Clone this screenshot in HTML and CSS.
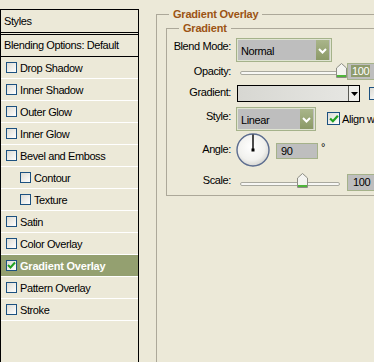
FILE: index.html
```html
<!DOCTYPE html>
<html lang="en">
<head>
  <meta charset="UTF-8">
  <title>Layer Style - Gradient Overlay</title>
  <link rel="stylesheet" href="styles.css">
</head>
<body>
  <div class="dialog">

    <div class="styles-list">
      <div class="list-head">Styles</div>
      <div class="list-blend">Blending Options: Default</div>
      <div class="item"><span class="cb"></span>Drop Shadow</div>
      <div class="item"><span class="cb"></span>Inner Shadow</div>
      <div class="item"><span class="cb"></span>Outer Glow</div>
      <div class="item"><span class="cb"></span>Inner Glow</div>
      <div class="item"><span class="cb"></span>Bevel and Emboss</div>
      <div class="item sub"><span class="cb"></span>Contour</div>
      <div class="item sub"><span class="cb"></span>Texture</div>
      <div class="item"><span class="cb"></span>Satin</div>
      <div class="item"><span class="cb"></span>Color Overlay</div>
      <div class="item active">
        <span class="cb"><svg width="9" height="9" viewBox="0 0 9 9"><polyline points="1,4 3.5,6.5 8,1.5" fill="none" stroke="#21a121" stroke-width="2"/></svg></span>Gradient Overlay
      </div>
      <div class="item"><span class="cb"></span>Pattern Overlay</div>
      <div class="item"><span class="cb"></span>Stroke</div>
    </div>

    <fieldset class="group outer">
      <legend>Gradient Overlay</legend>
      <fieldset class="group inner">
        <legend>Gradient</legend>

        <div class="row r-blend">
          <label>Blend Mode:</label>
          <div class="select blend-select">
            <span class="sel-text">Normal</span>
            <span class="sel-btn"><svg width="13" height="13" viewBox="0 0 13 13"><polyline points="3,5 6.5,8.5 10,5" fill="none" stroke="#fff" stroke-width="2"/></svg></span>
          </div>
        </div>

        <div class="row r-opacity">
          <label>Opacity:</label>
          <div class="slider">
            <div class="track"></div>
            <svg class="thumb thumb-max" width="11" height="15" viewBox="0 0 11 15">
              <path d="M0.5,14.5 V5 L5.5,0.5 L10.5,5 V14.5 Z" fill="#f4f4f0" stroke="#8d8d84"/>
              <rect x="1" y="12" width="9" height="2" fill="#4fb53a"/>
            </svg>
          </div>
          <div class="num num-sel"><span>100</span></div>
        </div>

        <div class="row r-gradient">
          <label>Gradient:</label>
          <div class="grad-box">
            <div class="grad-fill"></div>
            <div class="grad-arrow"><svg width="7" height="4" viewBox="0 0 7 4"><polygon points="0,0 7,0 3.5,4" fill="#000"/></svg></div>
          </div>
          <span class="cb cb-reverse"></span>
        </div>

        <div class="row r-style">
          <label>Style:</label>
          <div class="select style-select">
            <span class="sel-text">Linear</span>
            <span class="sel-btn"><svg width="13" height="13" viewBox="0 0 13 13"><polyline points="3,5 6.5,8.5 10,5" fill="none" stroke="#fff" stroke-width="2"/></svg></span>
          </div>
          <span class="cb cb-align"><svg width="9" height="9" viewBox="0 0 9 9"><polyline points="1,4 3.5,6.5 8,1.5" fill="none" stroke="#21a121" stroke-width="2"/></svg></span>
          <span class="align-text">Align with Layer</span>
        </div>

        <div class="row r-angle">
          <label>Angle:</label>
          <svg class="dial" width="34" height="34" viewBox="0 0 34 34">
            <defs>
              <radialGradient id="dialFill" cx="0.45" cy="0.4" r="0.6">
                <stop offset="0" stop-color="#ffffff"/>
                <stop offset="0.7" stop-color="#f1f1ee"/>
                <stop offset="1" stop-color="#d6d6d2"/>
              </radialGradient>
            </defs>
            <circle cx="17" cy="17" r="16" fill="url(#dialFill)" stroke="#5b6c8f" stroke-width="1.4"/>
            <line x1="17" y1="17" x2="17" y2="1.5" stroke="#000" stroke-width="1.4"/>
            <rect x="15.5" y="15.5" width="3" height="3" fill="#000"/>
          </svg>
          <div class="num num-angle"><span>90</span></div>
          <span class="deg">°</span>
        </div>

        <div class="row r-scale">
          <label>Scale:</label>
          <div class="slider">
            <div class="track"></div>
            <svg class="thumb thumb-mid" width="11" height="15" viewBox="0 0 11 15">
              <path d="M0.5,14.5 V5 L5.5,0.5 L10.5,5 V14.5 Z" fill="#f4f4f0" stroke="#8d8d84"/>
              <rect x="1" y="12" width="9" height="2" fill="#4fb53a"/>
            </svg>
          </div>
          <div class="num num-scale"><span>100</span></div>
        </div>

      </fieldset>
    </fieldset>

  </div>
</body>
</html>
```

FILE: styles.css
```css
body {
  margin: 0;
  background: #ece9d8;
  font-family: "Liberation Sans", Arial, sans-serif;
  font-size: 11px;
  letter-spacing: -0.4px;
  color: #000;
  overflow: hidden;
  height: 362px;
}
.dialog {
  display: flex;
  align-items: flex-start;
  width: 640px;
}

/* left list */
.styles-list {
  flex: none;
  width: 139px;
  height: 360px;
  margin-top: 9px;
  border: 1px solid #000;
  border-bottom: none;
  box-sizing: border-box;
}
.list-head {
  height: 22px;
  line-height: 22px;
  padding-left: 3px;
  border-bottom: 3px double #000;
}
.list-blend {
  height: 21px;
  line-height: 21px;
  padding-left: 3px;
  border-bottom: 1px solid #000;
}
.item {
  height: 21px;
  display: flex;
  align-items: center;
  padding-left: 5px;
  border-bottom: 1px solid #fff;
}
.item.sub {
  padding-left: 19px;
}
.item.active {
  background: #94a070;
  color: #fff;
  font-weight: bold;
  letter-spacing: -0.2px;
}
.cb {
  flex: none;
  width: 11px;
  height: 11px;
  margin-right: 3px;
  border: 1px solid #1c5180;
  box-sizing: border-box;
  background: linear-gradient(135deg, #dcdbd4, #ffffff);
  display: flex;
  align-items: center;
  justify-content: center;
}
.cb svg {
  display: block;
}

/* group boxes */
.group {
  border: 1px solid #aca899;
  margin: 0;
  min-width: 0;
}
.group legend {
  font-weight: bold;
  color: #9c5414;
  line-height: 13px;
  padding: 0 4px;
  letter-spacing: -0.2px;
}
.outer {
  flex: none;
  width: 420px;
  height: 400px;
  margin: 8px 0 0 17px;
  padding: 1px 0 0 9px;
}
.outer > legend {
  margin-left: 3px;
}
.inner {
  width: 300px;
  padding: 3px 0 4px 0;
}
.inner > legend {
  margin-left: 12px;
}

/* rows */
.row {
  display: flex;
  align-items: flex-start;
}
.row label {
  flex: none;
  width: 64px;
  margin-right: 5px;
  text-align: right;
  line-height: 13px;
}
.r-blend { height: 24px; }
.r-blend label { margin-top: 2px; }
.r-opacity { height: 17px; margin-top: 1px; }
.r-opacity label { margin-top: 2px; }
.r-gradient { height: 17px; margin-top: 5px; }
.r-gradient label { margin-top: 1px; }
.r-style { height: 24px; margin-top: 5px; }
.r-style label { margin-top: 3px; }
.r-angle { height: 33px; margin-top: 2px; }
.r-angle label { margin-top: 10px; }
.r-scale { height: 17px; margin-top: 8px; }

/* select boxes */
.select {
  flex: none;
  display: flex;
  align-items: center;
  height: 24px;
  box-sizing: border-box;
  border: 1px solid #a5b28a;
  box-shadow: inset 0 0 0 1px #dfe4d2;
  background: #bebebe;
}
.blend-select { width: 96px; }
.style-select { width: 80px; }
.sel-text {
  flex: 1;
  padding-left: 4px;
  padding-top: 2px;
}
.sel-btn {
  flex: none;
  width: 13px;
  height: 20px;
  margin-right: 2px;
  display: flex;
  align-items: center;
  justify-content: center;
  background: linear-gradient(#a9b58a, #8b9967);
}

/* sliders */
.slider {
  flex: none;
  position: relative;
  width: 111px;
  height: 17px;
}
.track {
  margin: 8px 9px 0 4px;
  height: 4px;
  box-sizing: border-box;
  border: 1px solid #a9a99f;
  border-radius: 2px;
  background: #f7f7f4;
}
.thumb {
  position: absolute;
  top: 0;
}
.thumb-max { left: 100px; }
.r-scale .track { margin-right: 7px; }
.r-scale .thumb { top: -1px; }
.thumb-mid { left: 61px; }

/* numeric fields */
.num {
  flex: none;
  height: 17px;
  box-sizing: border-box;
  border: 1px solid #a5b28a;
  background: #bebebe;
  line-height: 15px;
  padding-left: 3px;
}
.num-sel { width: 40px; }
.num-sel span {
  background: #8f9b6c;
  color: #fff;
  padding: 0 1px;
}
.num-scale { width: 40px; padding-left: 5px; }
.r-scale .slider { height: 17px; }
.num-angle {
  width: 42px;
  height: 16px;
  margin: 10px 0 0 6px;
  padding-left: 4px;
}
.deg {
  margin: 8px 0 0 3px;
}

/* gradient picker */
.grad-box {
  flex: none;
  display: flex;
  width: 123px;
  height: 17px;
  margin-left: 1px;
  box-sizing: border-box;
  border: 1px solid #000;
}
.grad-fill {
  flex: 1;
  background: linear-gradient(to right, #d7d7d2, #e6e6e2);
}
.grad-arrow {
  flex: none;
  width: 10px;
  border-left: 1px solid #5a5a55;
  background: #eeeeea;
  display: flex;
  align-items: center;
  justify-content: center;
}
.grad-arrow svg { display: block; }
.cb-reverse {
  width: 13px;
  height: 13px;
  margin: 2px 0 0 9px;
}

/* style row extras */
.dial {
  flex: none;
  display: block;
}
.cb-align {
  width: 13px;
  height: 13px;
  margin: 5px 2px 0 11px;
}
.cb-align svg {
  width: 10px;
  height: 10px;
}
.align-text {
  margin-top: 6px;
  white-space: nowrap;
}
```
